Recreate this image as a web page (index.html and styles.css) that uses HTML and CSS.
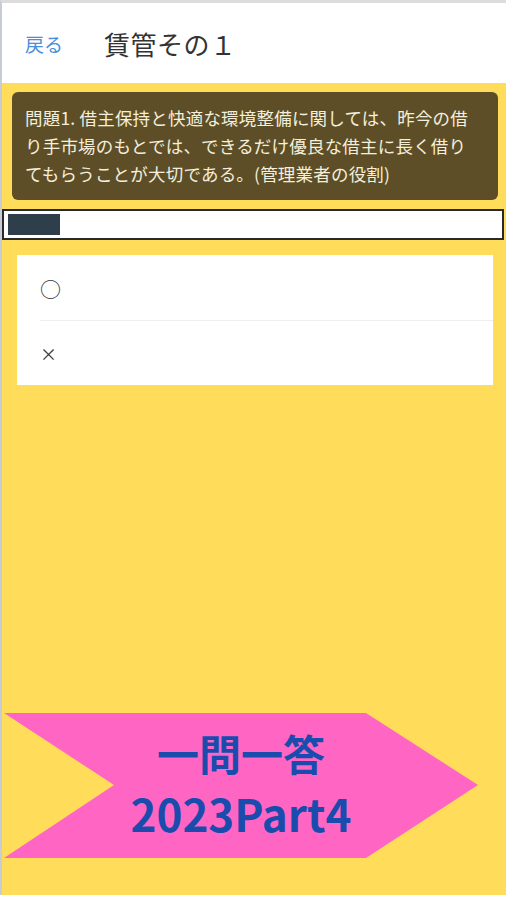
FILE: index.html
```html
<!DOCTYPE html>
<html lang="ja">
  <head>
    <meta charset="UTF-8" />
    <meta name="viewport" content="width=device-width, initial-scale=1.0" />
    <title>賃管その１</title>
    <link rel="stylesheet" href="styles.css">
  </head>
  <body>
    <div class="app">
      <header class="topbar">
        <a class="back" href="#">戻る</a>
        <h1>賃管その１</h1>
      </header>

      <main class="quiz">
        <div class="question">
          問題1. 借主保持と快適な環境整備に関しては、昨今の借り手市場のもとでは、できるだけ優良な借主に長く借りてもらうことが大切である。(管理業者の役割)
        </div>

        <div class="progress">
          <div class="progress-fill" style="width: 52px"></div>
        </div>

        <ul class="answers">
          <li class="circle">○</li>
          <li>×</li>
        </ul>

        <div class="banner">
          <span class="banner-title">一問一答</span>
          <span class="banner-sub">2023Part4</span>
        </div>
      </main>
    </div>
  </body>
</html>
```

FILE: styles.css
```css
* {
  padding: 0;
  margin: 0;
  box-sizing: border-box;
}
body {
  font-family: "Noto Sans CJK JP", "Noto Sans", sans-serif;
  background-color: #fff;
}

.app {
  border-top: 3px solid #dcdcdc;
  border-left: 2px solid #c8ccd6;
}

.topbar {
  height: 80px;
  background-color: #fff;
  display: flex;
  align-items: center;
  padding-left: 23px;
}

.back {
  color: #4a8ee0;
  font-size: 19px;
  text-decoration: none;
  margin-right: 41px;
}

.topbar h1 {
  font-size: 26px;
  font-weight: 400;
  letter-spacing: 0.5px;
  color: #333;
}

.quiz {
  height: 812px;
  background-color: #ffdc5a;
  padding: 9px 8px 0 10px;
  display: flex;
  flex-direction: column;
}

.question {
  background-color: #5e4e27;
  color: #f3efdc;
  border-radius: 6px;
  font-size: 17.5px;
  letter-spacing: 0.2px;
  line-height: 28px;
  padding: 12px 16px 12px 13px;
}

.progress {
  margin: 9px -6px 0 -10px;
  height: 31px;
  background-color: #fff;
  border: 2px solid #2a2a2a;
  padding: 3px 4px;
}

.progress-fill {
  height: 100%;
  background-color: #2e3f4b;
}

.answers {
  list-style: none;
  margin: 15px 5px 0 5px;
  background-color: #fff;
  padding-left: 23px;
}

.answers li {
  height: 65px;
  display: flex;
  align-items: center;
  font-size: 17px;
  color: #333;
}

.answers .circle {
  font-size: 21px;
}

.answers li + li {
  border-top: 1px solid #eee;
}

.banner {
  margin: auto 0 37px -8px;
  width: 474px;
  height: 145px;
  background-color: #ff66c4;
  clip-path: polygon(0 0, 362px 0, 474px 72px, 362px 145px, 0 145px, 110px 72px);
  display: flex;
  flex-direction: column;
  align-items: center;
  color: #1a4cae;
  font-weight: 700;
}

.banner-title {
  font-size: 42px;
  line-height: 44px;
  margin-top: 18px;
}

.banner-sub {
  font-size: 44px;
  line-height: 50px;
  margin-top: 13px;
}
```
